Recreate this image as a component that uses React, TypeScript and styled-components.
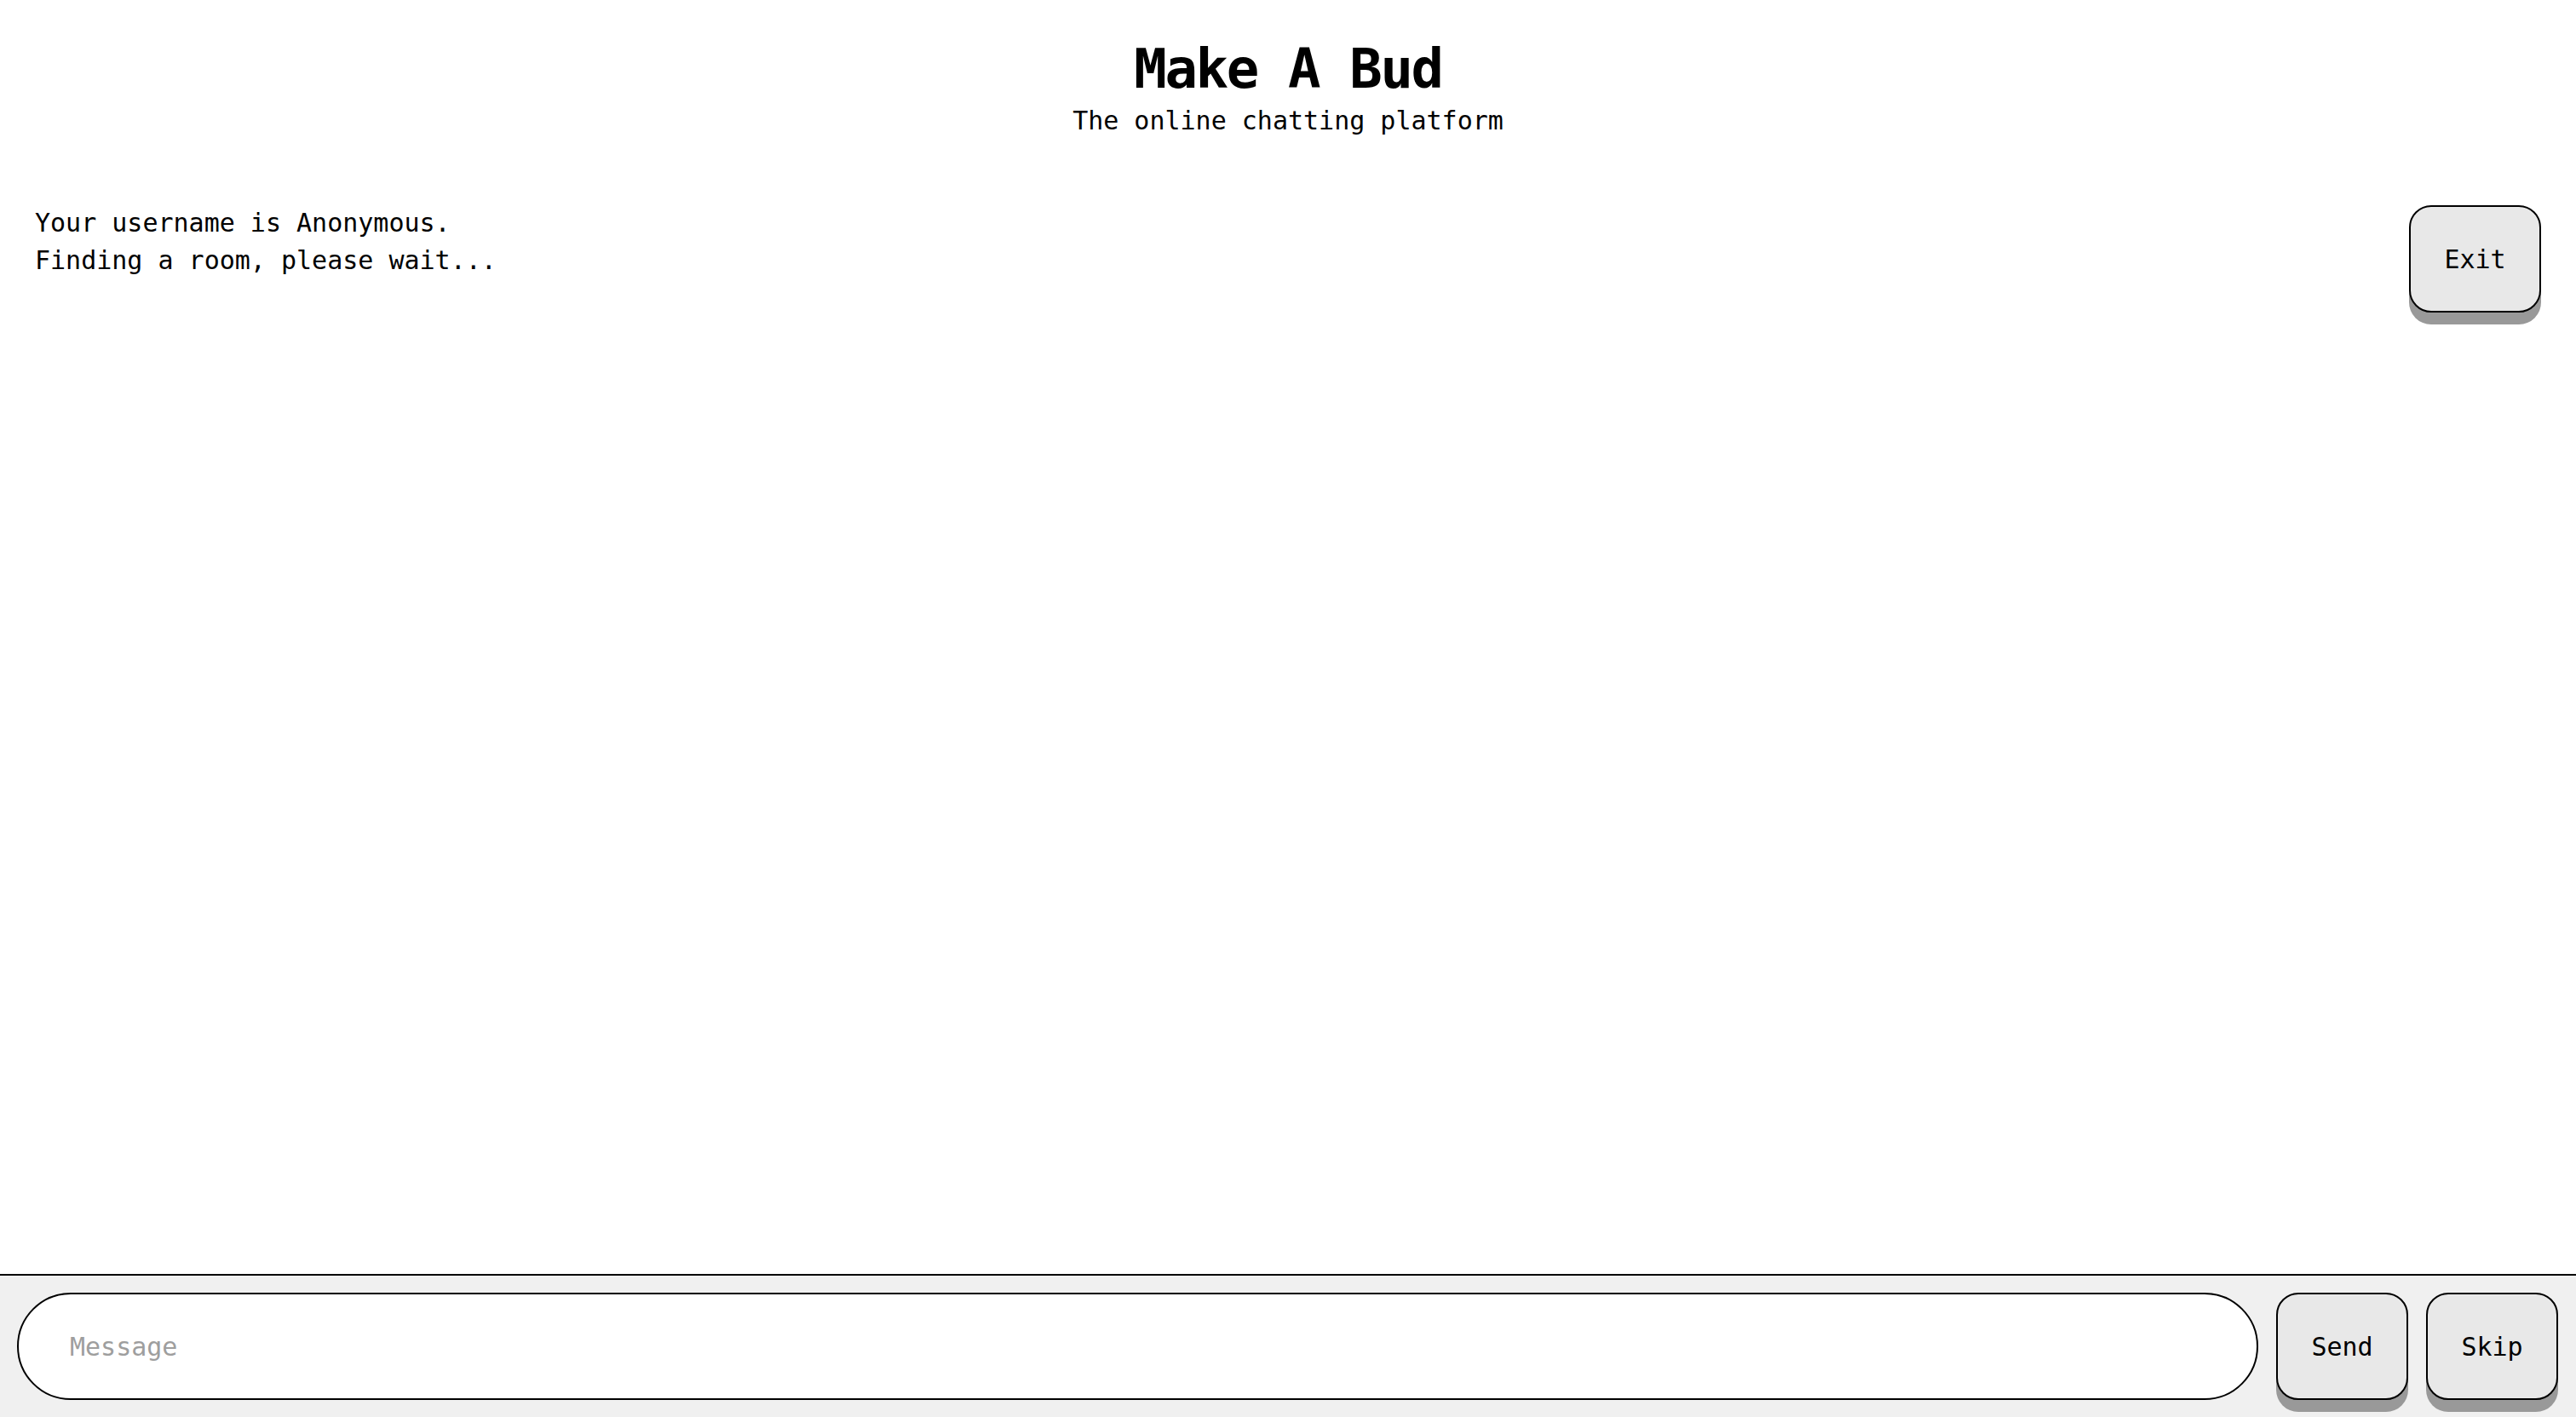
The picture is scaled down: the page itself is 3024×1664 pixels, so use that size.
import React from "react";
import styled, { createGlobalStyle } from "styled-components";

const GlobalStyle = createGlobalStyle`
  html, body {
    margin: 0;
    padding: 0;
    background: #ffffff;
  }
  body {
    font-family: "DejaVu Sans Mono", "Liberation Mono", monospace;
    color: #000000;
  }
  * { box-sizing: border-box; }
`;

const Page = styled.div`
  height: 100vh;
  display: flex;
  flex-direction: column;
`;

const Header = styled.header`
  padding-top: 44px;
  display: flex;
  flex-direction: column;
  align-items: center;
`;

const Title = styled.h1`
  margin: 0;
  font-size: 64px;
  line-height: 74px;
  letter-spacing: -2.4px;
  font-weight: 700;
`;

const Subtitle = styled.p`
  margin: 6px 0 0;
  font-size: 30px;
  line-height: 35px;
`;

const ChatArea = styled.main`
  flex: 1;
  display: flex;
  align-items: flex-start;
  justify-content: space-between;
  padding: 81px 41px 0 41px;
`;

const Messages = styled.div`
  display: flex;
  flex-direction: column;
`;

const Line = styled.div`
  font-size: 30px;
  line-height: 44px;
  white-space: pre;
`;

const KeyButton = styled.button<{ $offset?: number }>`
  width: 155px;
  height: 126px;
  margin-top: ${(p) => p.$offset ?? 0}px;
  flex-shrink: 0;
  border: 2px solid #000000;
  border-radius: 26px;
  background: #e8e8e8;
  box-shadow: 0 14px 0 #999999;
  font-family: "DejaVu Sans Mono", "Liberation Mono", monospace;
  font-size: 30px;
  color: #000000;
  cursor: pointer;
  padding: 0;
`;

const Footer = styled.footer`
  border-top: 2px solid #000000;
  background: #f0f0f0;
  display: flex;
  align-items: center;
  gap: 21px;
  padding: 20px 21px 20px 20px;
`;

const MessageInput = styled.input`
  flex: 1;
  min-width: 0;
  height: 126px;
  border: 2px solid #000000;
  border-radius: 999px;
  background: #ffffff;
  padding: 0 60px;
  font-family: "DejaVu Sans Mono", "Liberation Mono", monospace;
  font-size: 30px;
  color: #000000;
  outline: none;
  &::placeholder {
    color: #9e9e9e;
  }
`;

export default function App() {
  return (
    <>
      <GlobalStyle />
      <Page>
        <Header>
          <Title>Make A Bud</Title>
          <Subtitle>The online chatting platform</Subtitle>
        </Header>
        <ChatArea>
          <Messages>
            <Line>Your username is Anonymous.</Line>
            <Line>Finding a room, please wait...</Line>
          </Messages>
          <KeyButton $offset={1}>Exit</KeyButton>
        </ChatArea>
        <Footer>
          <MessageInput placeholder="Message" />
          <KeyButton>Send</KeyButton>
          <KeyButton>Skip</KeyButton>
        </Footer>
      </Page>
    </>
  );
}
